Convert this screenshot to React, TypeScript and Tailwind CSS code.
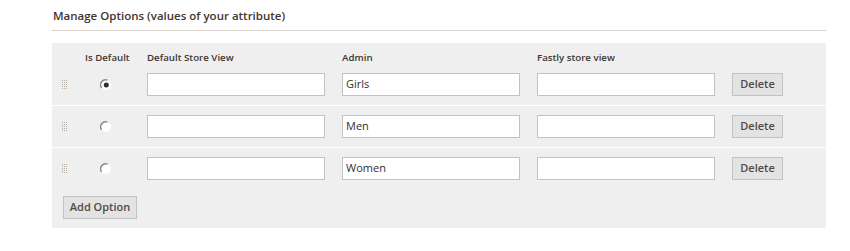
import React from 'react';

type OptionRow = {
  admin: string;
  isDefault: boolean;
};

const ROWS: OptionRow[] = [
  { admin: 'Girls', isDefault: true },
  { admin: 'Men', isDefault: false },
  { admin: 'Women', isDefault: false },
];

function DragHandle() {
  const dots = [];
  for (let r = 0; r < 5; r++) {
    for (let c = 0; c < 3; c++) {
      dots.push(<rect key={`${r}-${c}`} x={c * 2} y={r * 2} width="1" height="1" fill="#b5aca4" />);
    }
  }
  return (
    <svg width="6" height="10" viewBox="0 0 6 10">
      {dots}
    </svg>
  );
}

function Radio({ checked }: { checked: boolean }) {
  return (
    <svg width="12" height="12" viewBox="0 0 12 12">
      <circle cx="6" cy="6" r="5" fill="#ffffff" />
      <path d="M7.5 1.2 A5 5 0 0 0 1.6 8.8" fill="none" stroke="#8a8a8a" strokeWidth="1.4" />
      {checked && <circle cx="6.3" cy="6" r="2.5" fill="#303030" />}
    </svg>
  );
}

function TextField({ value }: { value?: string }) {
  return (
    <div className="w-[178px] h-[23px] bg-white border border-[#c2c2c2] flex items-center px-[3px] text-[11px] text-[#303030]">
      {value}
    </div>
  );
}

function GrayButton({ children, width }: { children: React.ReactNode; width: string }) {
  return (
    <button
      className={`${width} h-[23px] bg-[#e3e3e3] border border-[#c2c2c2] text-[11px] font-semibold text-[#514943] flex items-center justify-center`}
    >
      {children}
    </button>
  );
}

export default function App() {
  return (
    <div className="w-[850px] h-[251px] bg-white pt-[8px]" style={{ fontFamily: '"Open Sans", "Liberation Sans", sans-serif' }}>
      <div className="ml-[52px] w-[774px]">
        {/* Section title */}
        <div className="pb-[6px] border-b border-[#d9d3cc] pl-[1px]">
          <h2 className="text-[11.5px] leading-[16px] font-semibold text-[#41362f]">
            Manage Options (values of your attribute)
          </h2>
        </div>

        {/* Options table */}
        <div className="mt-[12px] bg-[#efefef] pb-[9px]">
          <div className="flex h-[21px] pt-[8px] pl-[33px] gap-[17px] text-[9.7px] leading-[14px] font-semibold text-[#41362f] whitespace-nowrap">
            <div className="w-[45px]">Is Default</div>
            <div className="w-[178px]">Default Store View</div>
            <div className="w-[178px]">Admin</div>
            <div className="w-[178px]">Fastly store view</div>
          </div>

          {ROWS.map((row, i) => (
            <div
              key={row.admin}
              className={`flex items-center pl-[10px] ${i < ROWS.length - 1 ? 'h-[42px] border-b border-white' : 'h-[41px]'}`}
            >
              <div className="w-[23px] flex items-center">
                <DragHandle />
              </div>
              <div className="w-[45px] flex justify-center pr-[4px]">
                <Radio checked={row.isDefault} />
              </div>
              <div className="flex items-center gap-[17px] ml-[17px]">
                <TextField />
                <TextField value={row.admin} />
                <TextField />
                <GrayButton width="w-[51px]">Delete</GrayButton>
              </div>
            </div>
          ))}

          <div className="pl-[11px] pt-[7px]">
            <GrayButton width="w-[74px]">Add Option</GrayButton>
          </div>
        </div>
      </div>
    </div>
  );
}
